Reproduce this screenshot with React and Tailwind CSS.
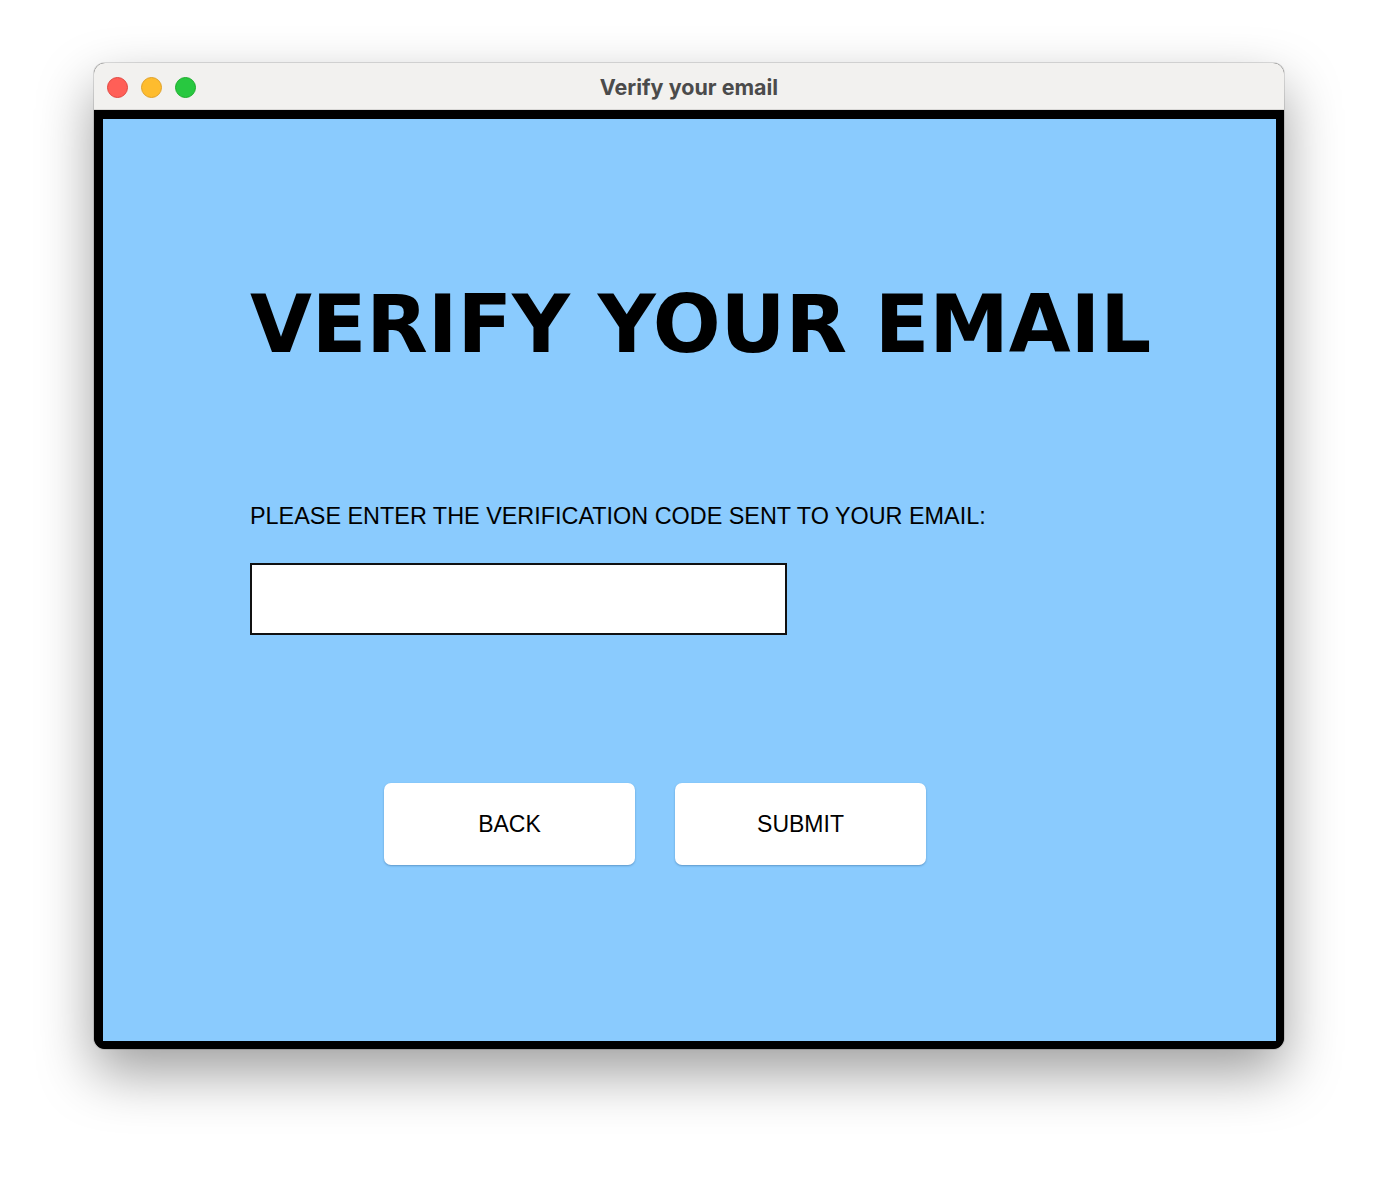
import React from "react";

export default function App() {
  return (
    <div className="w-[1384px] h-[1179px] bg-white pl-[94px] pt-[63px]">
      <div className="w-[1190px] h-[986px] rounded-[11px] overflow-hidden flex flex-col bg-black shadow-[0_0_0_1px_rgba(0,0,0,0.12),0_24px_55px_rgba(0,0,0,0.38)]">
        <div className="h-[47px] bg-[#f2f1ef] relative flex items-center justify-center border-b border-[#d8d7d5]">
          <div className="absolute left-[13px] top-[14px] flex gap-[13px]">
            <span className="block w-[21px] h-[21px] rounded-full bg-[#ff5f57] border border-[#e2463f]" />
            <span className="block w-[21px] h-[21px] rounded-full bg-[#febc2e] border border-[#e0a128]" />
            <span className="block w-[21px] h-[21px] rounded-full bg-[#28c840] border border-[#1dad2b]" />
          </div>
          <span className="pt-[2px] text-[21.5px] font-bold text-[#4b4b4b] font-['Inter',sans-serif]">
            Verify your email
          </span>
        </div>
        <div className="flex-1 border-t-[9px] border-l-[9px] border-r-[8px] border-b-[8px] border-black rounded-b-[11px] bg-black">
          <div className="h-full bg-[#8acbfe] pl-[147px] pt-[166px] flex flex-col items-start">
            <h1 className="text-[80px] leading-[80px] font-bold text-black font-['DejaVu_Sans',sans-serif] tracking-[-0.1px] whitespace-nowrap">
              VERIFY YOUR EMAIL
            </h1>
            <p className="mt-[137px] text-[23.4px] leading-[28px] text-black font-['Liberation_Sans',sans-serif] whitespace-nowrap">
              PLEASE ENTER THE VERIFICATION CODE SENT TO YOUR EMAIL:
            </p>
            <input
              type="text"
              className="mt-[33px] w-[537px] h-[72px] bg-white border-2 border-[#111] outline-none"
            />
            <div className="mt-[148px] ml-[134px] flex gap-[40px]">
              <button className="w-[251px] h-[82px] bg-white rounded-[7px] shadow-[0_1px_2px_rgba(40,90,140,0.45)] text-[23px] text-black font-['Liberation_Sans',sans-serif]">
                BACK
              </button>
              <button className="w-[251px] h-[82px] bg-white rounded-[7px] shadow-[0_1px_2px_rgba(40,90,140,0.45)] text-[23px] text-black font-['Liberation_Sans',sans-serif]">
                SUBMIT
              </button>
            </div>
          </div>
        </div>
      </div>
    </div>
  );
}
